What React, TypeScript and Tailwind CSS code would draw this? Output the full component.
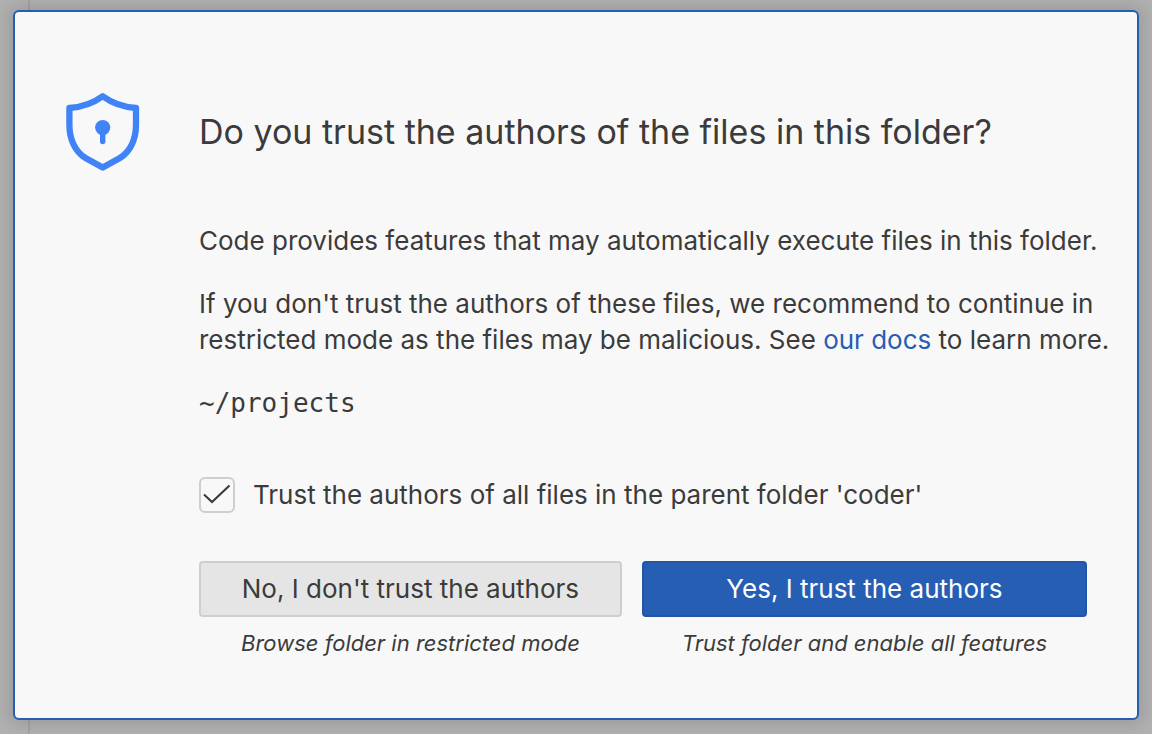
import { useState } from "react";

const choices = [
  {
    id: "restricted",
    label: "No, I don't trust the authors",
    hint: "Browse folder in restricted mode",
    className: "border-[#cecece] bg-[#e5e5e5] text-[#3b3b3b]",
  },
  {
    id: "trusted",
    label: "Yes, I trust the authors",
    hint: "Trust folder and enable all features",
    className: "border-[#2255a5] bg-[#265eb4] text-white",
  },
];

function ShieldIcon() {
  return (
    <svg viewBox="0 0 76 80" className="h-20 w-[76px] shrink-0" fill="none" stroke="#4083f6" aria-hidden="true">
      <path
        d="M37.7 4.2C28 11.3 17 15 4.4 16V33C4.4 47 10 59.5 20.5 66L37.7 75.6L54.9 66C65.4 59.5 71 47 71 33V16C58.4 15 47.4 11.3 37.7 4.2Z"
        strokeWidth="6.3"
        strokeLinejoin="round"
      />
      <circle cx="37.7" cy="35.6" r="7.6" fill="#4083f6" stroke="none" />
      <path d="M37.7 36V49.5" strokeWidth="5.4" strokeLinecap="round" />
    </svg>
  );
}

export default function App() {
  const [trustParent, setTrustParent] = useState(true);

  return (
    <div className="relative min-h-screen bg-[#b0b0b0] px-[13px] pt-[10px] pb-[14px] font-[Inter,sans-serif] text-[26px] leading-9 text-[#3b3b3b]">
      {/* Dimmed sidebar behind the dialog */}
      <div className="absolute inset-y-0 left-0 w-[30px] border-r-2 border-[#a2a2a2] bg-[#b0b0b0]" />

      <main
        role="dialog"
        aria-labelledby="trust-title"
        className="relative rounded-md border-2 border-[#265eb4] bg-[#f8f8f8] pt-20 pr-6 pb-[59px] pl-[50px] shadow-[0_0_16px_4px_rgba(0,0,0,0.12)]"
      >
        <header className="flex items-center gap-[58px]">
          <ShieldIcon />
          <h1 id="trust-title" className="text-[34px] leading-[44px]">
            Do you trust the authors of the files in this folder?
          </h1>
        </header>

        <div className="ml-[134px] pt-[51px]">
          <div className="flex flex-col gap-[27px]">
            <p>Code provides features that may automatically execute files in this folder.</p>
            <p>
              If you don't trust the authors of these files, we recommend to continue in
              restricted mode as the files may be malicious. See{" "}
              <a href="#docs" className="text-[#265eb4] hover:underline">
                our docs
              </a>{" "}
              to learn more.
            </p>
            <p className="font-['DejaVu_Sans_Mono',monospace]">~/projects</p>
          </div>

          <label className="mt-14 flex items-center gap-[18px]">
            <span className="relative size-9">
              <input
                type="checkbox"
                checked={trustParent}
                onChange={(e) => setTrustParent(e.target.checked)}
                className="block size-9 appearance-none rounded-md border-2 border-[#cecece] bg-[#f8f8f8]"
              />
              {trustParent && (
                <svg
                  viewBox="0 0 36 36"
                  className="pointer-events-none absolute inset-0 size-9"
                  fill="none"
                  stroke="#3b3b3b"
                  strokeWidth="2.1"
                >
                  <path d="M5 17.5L13 25L30.5 8.5" />
                </svg>
              )}
            </span>
            Trust the authors of all files in the parent folder 'coder'
          </label>

          <div className="mt-12 mr-[26px] grid grid-cols-[19fr_20fr] gap-5">
            {choices.map((choice) => (
              <div key={choice.id} className="text-center">
                <button
                  type="button"
                  aria-describedby={choice.id}
                  className={`block h-14 w-full rounded-sm border-2 ${choice.className}`}
                >
                  {choice.label}
                </button>
                <p id={choice.id} className="mt-[10px] text-[22px] leading-8 italic">
                  {choice.hint}
                </p>
              </div>
            ))}
          </div>
        </div>
      </main>
    </div>
  );
}
